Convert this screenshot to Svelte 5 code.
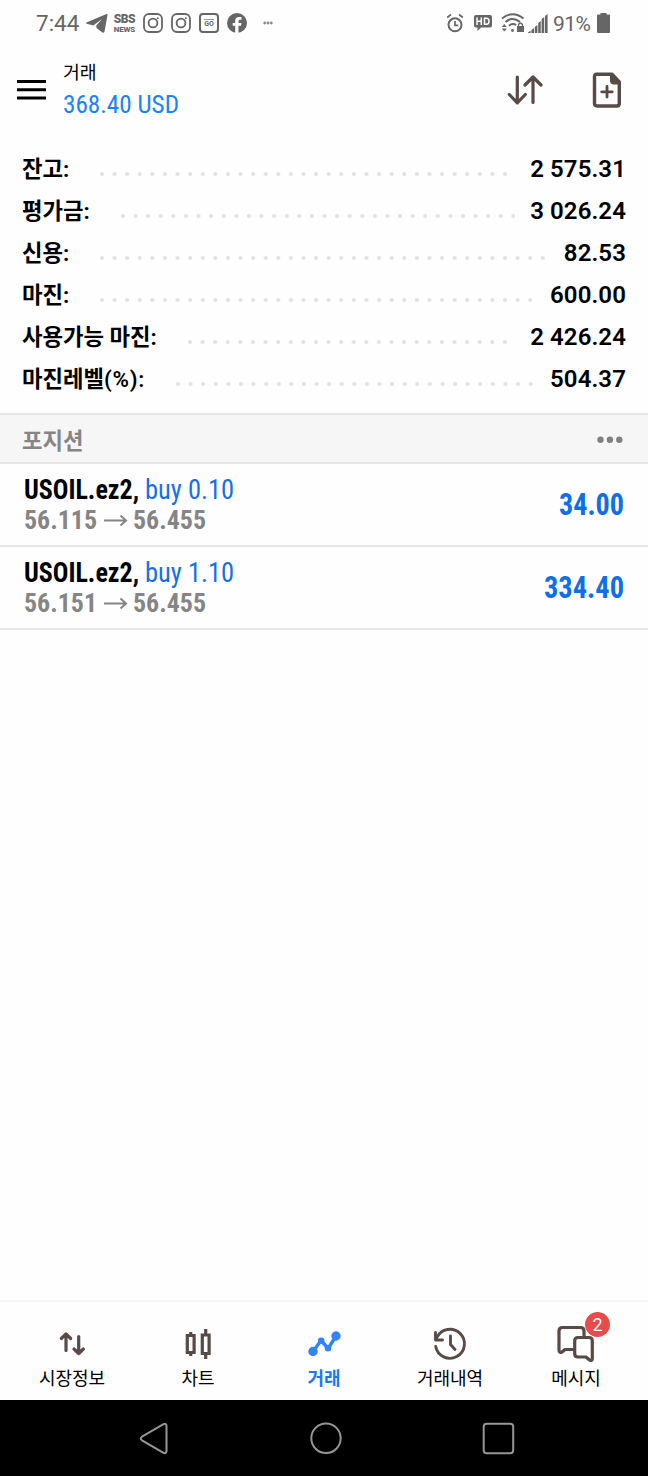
<script>
  const account = [
    { label: '잔고:', value: '2 575.31' },
    { label: '평가금:', value: '3 026.24' },
    { label: '신용:', value: '82.53' },
    { label: '마진:', value: '600.00' },
    { label: '사용가능 마진:', value: '2 426.24' },
    { label: '마진레벨', unit: '(%):', value: '504.37' },
  ]

  const positions = [
    { symbol: 'USOIL.ez2,', side: 'buy 0.10', open: '56.115', current: '56.455', profit: '34.00', width: 65 },
    { symbol: 'USOIL.ez2,', side: 'buy 1.10', open: '56.151', current: '56.455', profit: '334.40', width: 80 },
  ]

  const tabs = [
    { id: 'quotes', label: '시장정보' },
    { id: 'chart', label: '차트' },
    { id: 'trade', label: '거래' },
    { id: 'history', label: '거래내역' },
    { id: 'messages', label: '메시지', badge: 2 },
  ]

  let active = $state('trade')
</script>

<!-- condensed text, squeezed to a given width -->
{#snippet condensed(text, width, height, cls)}
  <svg class="condensed {cls}" {width} {height}>
    <text x="0" y={height - 7} textLength={width} lengthAdjust="spacingAndGlyphs">{text}</text>
  </svg>
{/snippet}

{#snippet instagram()}
  <svg class="insta" width="20" height="20" viewBox="0 0 20 20" fill="none" stroke="#666" stroke-width="1.8">
    <rect x="1" y="1" width="18" height="18" rx="5" />
    <circle cx="10" cy="10" r="4.4" />
    <circle cx="14.8" cy="5.2" r="1" fill="#666" stroke="none" />
  </svg>
{/snippet}

{#snippet tabIcon(id)}
  <svg width="48" height="40" viewBox="0 0 48 40" fill="none" stroke="#564b47" stroke-width="3" stroke-linecap="round" stroke-linejoin="round">
    {#if id === 'quotes'}
      <path d="M18 28.500V12.500M13.300 16.500l4.700-4.500 4.700 4.500M30.700 14.500v17M26 27l4.700 4.500 4.700-4.500" stroke-width="3.200" />
    {:else if id === 'chart'}
      <path d="M16.700 10v3M16.700 30.500v3.500M31.700 7v5.500M31.700 31.500v5.500" stroke-width="3.200" stroke-linecap="butt" />
      <path d="M13.300 13.500h6.800v17h-6.800zM28.300 13h6.800v18.500h-6.800z" stroke-width="3.200" stroke-linejoin="miter" />
    {:else if id === 'trade'}
      <g stroke="#3583fb" fill="#3583fb">
        <path d="M13 29.500l8-11 7.200 8L36 14" fill="none" stroke-width="3.400" />
        <circle cx="13" cy="29.500" r="3.200" />
        <circle cx="21.200" cy="18.700" r="1.800" />
        <circle cx="28" cy="26.300" r="1.800" />
        <circle cx="36" cy="14" r="3.200" />
      </g>
    {:else if id === 'history'}
      <path d="M11 15.200A14.500 14.500 0 1 1 9.700 24.500M9.500 10.500v7.500h7M24.500 14V22.500l4.500 5" stroke-width="2.900" />
    {:else}
      <path d="M20.500 27.500h-7.500l-3 2.500q-3 1.500-3-2V9q0-3.500 3.500-3.500h18q3.500 0 3.500 3.500V14" stroke-width="3.200" />
      <path d="M26 15.500h11q3.300 0 3.300 3.300v18q0 2.500-2.800 1.200l-3.500-3h-8q-3.300 0-3.300-3.300V18.800q0-3.300 3.300-3.300z" stroke-width="3.200" />
    {/if}
  </svg>
{/snippet}

<main>
  <div class="status">
    <span class="time">7:44</span>
    <svg class="telegram" width="22" height="20" viewBox="0 0 22 20">
      <path d="M0 10.500Q-.3 10 .5 9.500L20.500 1q1.200-.3 1 1L18.500 18.500Q18 20.500 16 19.300L10.500 15l-.3-2.500 6-6.500-9 6.500z" fill="#666" />
    </svg>
    <div class="sbs"><b>SBS</b><span>NEWS</span></div>
    {@render instagram()}
    {@render instagram()}
    <div class="go"><i></i><span>GO</span></div>
    <svg class="facebook" width="20" height="20" viewBox="0 0 20 20">
      <circle cx="10" cy="10" r="10" fill="#666" />
      <path d="M8.200 20v-7.200H5.700V10h2.500V8q0-4 3.800-4h2.500v2.700h-1.500q-1.500 0-1.500 1.500V10h3l-.5 2.800h-2.500V20z" fill="#fff" />
    </svg>
    <svg class="more" width="10" height="4" viewBox="0 0 10 4" fill="#8a8a8a">
      <circle cx="1.700" cy="2" r="1.400" /><circle cx="5" cy="2" r="1.400" /><circle cx="8.300" cy="2" r="1.400" />
    </svg>

    <svg class="alarm" width="18" height="20" viewBox="0 0 18 20" fill="none" stroke="#666" stroke-width="2">
      <circle cx="9" cy="11.800" r="6.500" />
      <path d="M9 8v4.300h3.300M1.200 4.500l3.800-3M16.800 4.500l-3.800-3" stroke-width="1.700" />
    </svg>
    <svg class="hd" width="18" height="16" viewBox="0 0 18 16">
      <path d="M2 0h14q2 0 2 2v8.500q0 2-2 2H7L3.500 16v-3.500H2q-2 0-2-2V2q0-2 2-2z" fill="#666" />
      <path d="M3 2.500v7.500M7.300 2.500v7.500M3 6.200h4.300M10.500 3.200h2q2.500 0 2.500 3t-2.500 3h-2z" fill="none" stroke="#fff" stroke-width="1.500" />
    </svg>
    <svg class="wifi" width="24" height="20" viewBox="0 0 24 20" fill="none" stroke="#666" stroke-width="2">
      <path d="M1 5.500Q11.500-3 22.500 5.500M4.500 9Q11.500 3 19 9M8 12.700q3.500-3 7.200-.7" />
      <circle cx="11.500" cy="17.500" r="1.400" fill="#666" stroke="none" />
      <path d="M.8 14l2.500-3 2.500 3zM.8 15.500l2.500 3 2.500-3z" fill="#666" stroke="none" />
      <rect x="16" y="13" width="7" height="6" fill="#666" stroke="none" />
      <path d="M17.500 13v-1.500q2-2.500 4 0V13" stroke-width="1.300" />
    </svg>
    <svg class="signal" width="20" height="19" viewBox="0 0 20 19" fill="#666">
      <path d="M0 18.500l2.600-2V19H0zM3.400 16l2.600-2v5H3.400zM6.800 13l2.600-2v8H6.800zM10.200 9l2.600-2v12h-2.600zM13.600 5l2.600-2v16h-2.600zM17 2l2.600-2v19H17z" />
    </svg>
    <span class="percent">91%</span>
    <svg class="battery" width="13" height="20" viewBox="0 0 13 20">
      <path d="M3.500 0h6v1.500H12q1 0 1 1V19q0 1-1 1H1q-1 0-1-1V2.500q0-1 1-1h2.500z" fill="#666" />
    </svg>
  </div>

  <header>
    <svg class="menu" width="29" height="20" viewBox="0 0 29 20">
      <path d="M0 1.500h29M0 9.700h29M0 17.900h29" stroke="#000" stroke-width="3" />
    </svg>
    <div class="title">
      <h1>거래</h1>
      {@render condensed('368.40 USD', 116, 32, 'total')}
    </div>
    <svg class="sort" width="36" height="32" viewBox="0 0 36 32" fill="none" stroke="#564b47" stroke-width="3.200" stroke-linecap="round" stroke-linejoin="round">
      <path d="M10.300 3v26M2.300 20.500l8 8.300 8-8.300M26 28.500V3M18 11l8-8 8 8" />
    </svg>
    <svg class="order" width="30" height="36" viewBox="0 0 30 36">
      <path d="M4.500 2.200h15.500L27.300 10v21.500q0 2.500-2.500 2.500H5q-2.500 0-2.500-2.500V4.500Q2.500 2.200 4.500 2.200z" fill="none" stroke="#564b47" stroke-width="3.400" stroke-linejoin="round" />
      <path d="M18 1.500h2.500L28.500 10v2.500H22q-4 0-4-4z" fill="#564b47" />
      <path d="M15 14.500v10.500M9.700 19.800h10.600" stroke="#564b47" stroke-width="2.800" stroke-linecap="round" />
    </svg>
  </header>

  <section class="account">
    {#each account as row}
      <div class="row">
        <span class="label">{row.label}{#if row.unit}<span class="unit">{row.unit}</span>{/if}</span>
        <span class="dots"></span>
        <span class="value">{row.value}</span>
      </div>
    {/each}
  </section>

  <div class="section-head">
    <h2>포지션</h2>
    <svg width="26" height="8" viewBox="0 0 26 8" fill="#808080">
      <circle cx="3.500" cy="3.800" r="3.200" /><circle cx="12.900" cy="3.800" r="3.200" /><circle cx="22.300" cy="3.800" r="3.200" />
    </svg>
  </div>

  <section class="positions">
    {#each positions as p}
      <div class="position">
        <div class="info">
          <div class="line">
            {@render condensed(p.symbol, 115, 32, 'symbol')}
            {@render condensed(p.side, 89, 32, 'side')}
          </div>
          <div class="line prices">
            {@render condensed(p.open, 73, 30, 'price')}
            <svg class="arrow" width="23" height="12" viewBox="0 0 23 12">
              <path d="M0 5.500h21M16.500 .5L22 5.500l-5.500 5" fill="none" stroke="#858585" stroke-width="2" />
            </svg>
            {@render condensed(p.current, 73, 30, 'price')}
          </div>
        </div>
        {@render condensed(p.profit, p.width, 34, 'profit')}
      </div>
    {/each}
  </section>

  <nav>
    {#each tabs as tab}
      <button class:active={active === tab.id} onclick={() => (active = tab.id)}>
        <span class="icon">
          {@render tabIcon(tab.id)}
          {#if tab.badge}<span class="badge">{tab.badge}</span>{/if}
        </span>
        {tab.label}
      </button>
    {/each}
  </nav>

  <footer>
    <svg width="30" height="34" viewBox="0 0 30 34"><path d="M3 15.700L24.500 3.200q3-1.200 3 1.800v25q0 3-3 1.800L3 19.300q-2.500-1.800 0-3.600z" /></svg>
    <svg width="34" height="34" viewBox="0 0 34 34"><circle cx="18" cy="17.300" r="14.700" /></svg>
    <svg width="34" height="34" viewBox="0 0 34 34"><rect x="2.700" y="2.700" width="29.500" height="29.500" rx="3" /></svg>
  </footer>
</main>

<style>
  :global(body) {
    margin: 0;
    background: #fff;
  }

  main {
    display: flex;
    flex-direction: column;
    width: 648px;
    height: 1476px;
    background: #fefefe;
    color: #000;
    font-family: Roboto, 'Noto Sans CJK KR', sans-serif;
  }

  svg {
    display: block;
    flex: none;
    overflow: visible;
  }

  .condensed {
    font-family: 'Roboto Condensed', Roboto, sans-serif;
    font-stretch: 75%;
  }

  /* status bar */
  .status {
    display: flex;
    align-items: center;
    box-sizing: border-box;
    height: 46px;
    padding: 0 38px 0 36px;
    color: #666;
  }

  .time,
  .percent {
    font-size: 22.500px;
    font-weight: 400;
    line-height: 24px;
  }

  .time {
    width: 50px;
  }

  .percent {
    width: 38px;
    margin: 0 6px 0 5px;
    padding-top: 1px;
    font-size: 21px;
    letter-spacing: -0.5px;
  }

  .sbs {
    display: flex;
    flex-direction: column;
    align-items: center;
    width: 23px;
    margin: 0 7px 0 5px;
  }

  .sbs b {
    font-size: 12px;
    font-weight: 900;
    line-height: 12px;
    letter-spacing: -0.5px;
  }

  .sbs span {
    font-size: 8px;
    font-weight: 800;
    line-height: 9px;
    letter-spacing: -0.2px;
  }

  .insta {
    margin-right: 8px;
  }

  .go {
    display: flex;
    flex-direction: column;
    align-items: center;
    justify-content: center;
    box-sizing: border-box;
    width: 20px;
    height: 20px;
    margin-right: 8px;
    border: 2px solid #666;
    border-radius: 4px;
    font-size: 7px;
    font-weight: 700;
    line-height: 7px;
  }

  .go i {
    width: 10px;
    height: 1px;
    margin-bottom: 1px;
    background: #999;
  }

  .more {
    margin: 0 auto 0 16px;
  }

  .hd {
    margin: 0 9px 0 10px;
  }

  .signal {
    margin-left: 3px;
  }

  /* header */
  header {
    display: flex;
    align-items: center;
    height: 88px;
    padding: 0 26px 0 17px;
  }

  .title {
    flex: 1;
    padding: 3px 0 0 17px;
  }

  h1 {
    margin: 0;
    font-size: 18.300px;
    font-weight: 400;
    line-height: 20px;
  }

  .total {
    margin-top: 5px;
    font-size: 26.500px;
    fill: #1c83f5;
  }

  .order {
    margin-left: 49px;
  }

  /* account summary */
  .account {
    padding: 14px 22px 13px;
  }

  .row {
    display: flex;
    align-items: center;
    height: 42px;
  }

  .label {
    font-size: 22.300px;
    font-weight: 700;
    line-height: 40px;
  }

  .unit {
    font-weight: 600;
    letter-spacing: 0.7px;
  }

  .dots {
    flex: 1;
    height: 6px;
    margin: 9px 15px 0 30px;
    background: radial-gradient(circle at 3px 3px, #e2e2e2 1.500px, transparent 2.500px) 0 0 / 12.600px 6px repeat-x;
  }

  .value {
    font-size: 24px;
    font-weight: 600;
    letter-spacing: 0.1px;
  }

  /* section header */
  .section-head {
    display: flex;
    align-items: center;
    justify-content: space-between;
    box-sizing: border-box;
    height: 51px;
    padding: 2px 25px 0 22px;
    border-top: 2px solid #e6e6e6;
    border-bottom: 2px solid #e6e6e6;
    background: #f6f6f6;
  }

  h2 {
    margin: 2px 0 0;
    color: #858585;
    font-size: 22.300px;
    font-weight: 700;
    line-height: 40px;
  }

  .position {
    display: flex;
    align-items: center;
    justify-content: space-between;
    box-sizing: border-box;
    height: 83px;
    padding: 0 24px;
    border-bottom: 2px solid #e6e6e6;
  }

  .line {
    display: flex;
    align-items: center;
    gap: 6px;
  }

  .prices {
    gap: 6.500px;
  }

  .symbol {
    font-size: 27px;
    font-weight: 700;
  }

  .side {
    font-size: 27px;
    fill: #176fe8;
  }

  .price {
    font-size: 26px;
    font-weight: 700;
    fill: #858585;
  }

  .profit {
    font-size: 31px;
    font-weight: 700;
    fill: #0f6fe8;
  }

  /* bottom tabs */
  nav {
    display: grid;
    grid-template-columns: repeat(5, 126px);
    box-sizing: border-box;
    height: 100px;
    margin-top: auto;
    padding: 20px 9px 0;
    border-top: 2px solid #f7f7f7;
  }

  button {
    display: flex;
    flex-direction: column;
    align-items: center;
    padding: 0;
    border: none;
    background: none;
    color: #000;
    font: 400 18px/33px Roboto, 'Noto Sans CJK KR', sans-serif;
  }

  button.active {
    color: #1c78f2;
    font-weight: 700;
  }

  .icon {
    position: relative;
  }

  .badge {
    position: absolute;
    top: -10px;
    right: -10px;
    width: 25px;
    height: 25px;
    border-radius: 50%;
    background: #e84b4b;
    color: #fff;
    font-size: 18px;
    line-height: 26px;
    text-align: center;
  }

  /* android navigation */
  footer {
    display: flex;
    align-items: center;
    justify-content: space-between;
    height: 76px;
    padding: 0 133px 0 139px;
    background: #000;
    fill: none;
    stroke: #969696;
    stroke-width: 2;
  }
</style>
